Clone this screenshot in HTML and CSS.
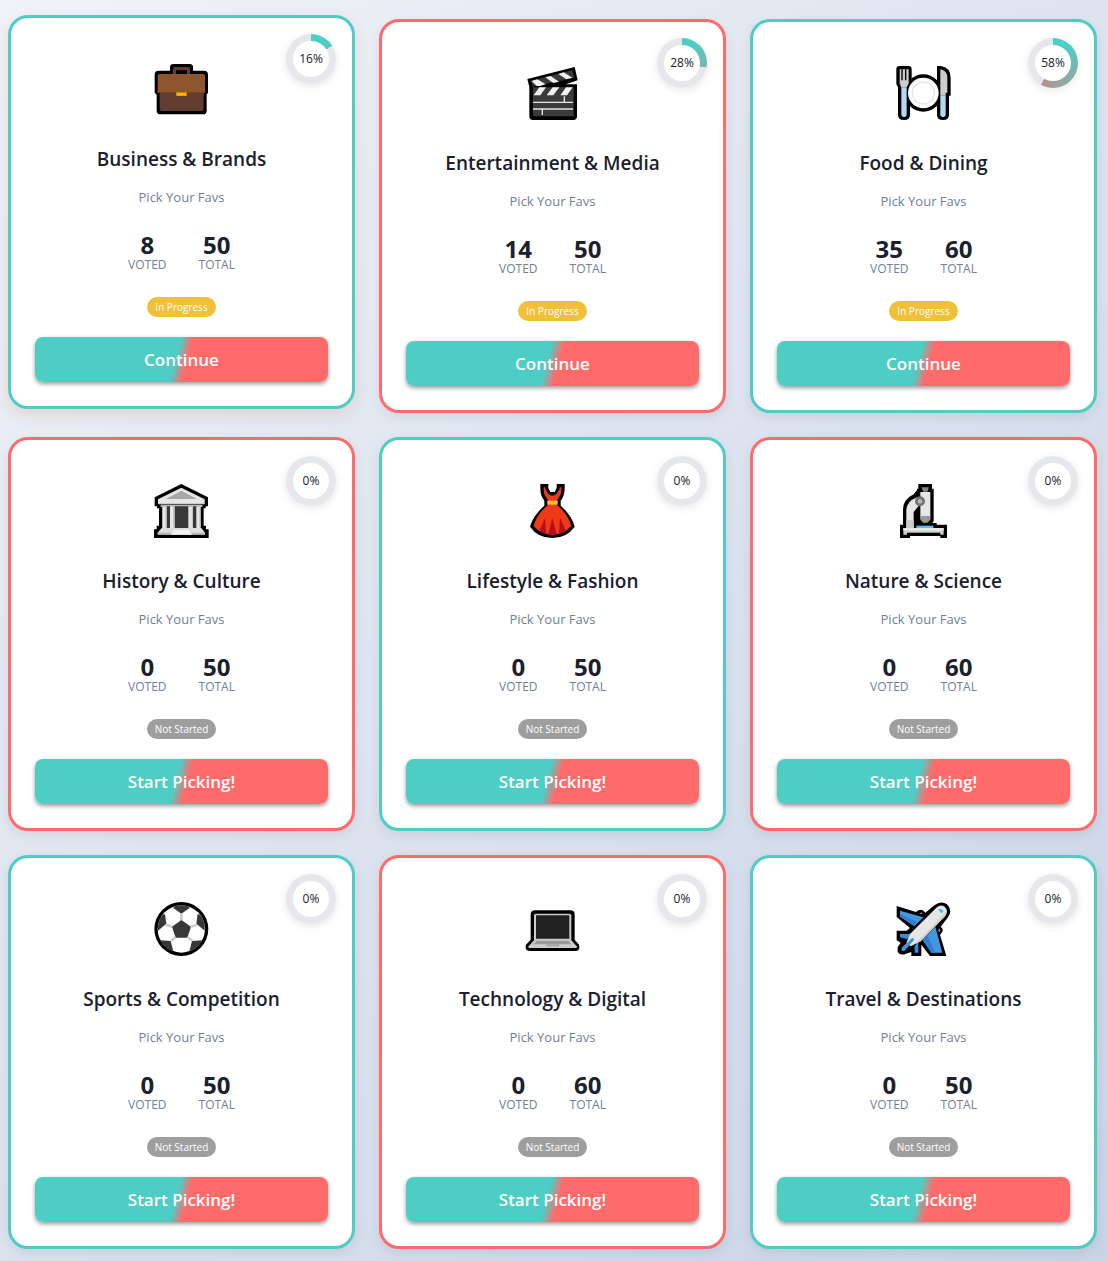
FILE: index.html
```html
<!DOCTYPE html>
<html lang="en">
<head>
    <meta charset="UTF-8">
    <meta name="viewport" content="width=device-width, initial-scale=1.0">
    <title>Pick Your Favs</title>
    <link rel="stylesheet" href="styles.css">
</head>
<body>

<main class="category-grid">
    <article class="card teal raised">
        <div class="progress" style="--done: 16%"><span>16%</span></div>
        <svg class="icon" viewBox="42 36 165 165" aria-hidden="true">
            <path d="M90 62V52Q90 42 100 42H149Q159 42 159 52V62H192Q204 62 204 74V128L200 134V182Q200 193 189 193H61Q50 193 50 182V134L44 128V74Q44 62 56 62Z" fill="#000"/>
            <path d="M99 72V57Q99 51 105 51H144Q150 51 150 57V72H141V61H108V72Z" fill="#613d30"/>
            <path d="M53 128V78Q53 72 59 72H189Q195 72 195 78V128Z" fill="#8e562e"/>
            <path d="M59 128H191V177Q191 183 185 183H65Q59 183 59 177Z" fill="#613d30"/>
            <path d="M53 126H195V129H53Z" fill="#7a4526"/>
            <path d="M108 126H141V138H108Z" fill="#d67d00"/>
            <path d="M111 129H138V137H111Z" fill="#ffb900"/>
        </svg>
        <h2>Business &amp; Brands</h2>
        <p class="subtitle">Pick Your Favs</p>
        <dl class="stats">
            <div><dt>Voted</dt><dd>8</dd></div>
            <div><dt>Total</dt><dd>50</dd></div>
        </dl>
        <span class="badge in-progress">In Progress</span>
        <button type="button">Continue</button>
    </article>

    <article class="card coral">
        <div class="progress" style="--done: 28%"><span>28%</span></div>
        <svg class="icon" viewBox="45 48 165 165" aria-hidden="true">
            <path d="M52 87L194 51L203 91L168 103H201V199Q201 210 190 210H69Q58 210 58 199V111Z" fill="#000"/>
            <path d="M62 92L187 61L193 83L69 110Z" fill="#3b3b3b"/>
            <path d="M65 93L82 88L107 103L90 108H80ZM106 82L122 78L147 95L130 99ZM145 72L161 67L187 83L169 88Z" fill="#f2f2f2"/>
            <path d="M69 112H191V199H69Z" fill="#3b3b3b"/>
            <path d="M88 112H108L91 136H71ZM128 112H148L130 136H110ZM168 112H188L171 136H151Z" fill="#f2f2f2"/>
            <path d="M69 157H189M69 177H189M163 139V157M97 177V195" stroke="#e6e6e6" stroke-width="4" fill="none"/>
        </svg>
        <h2>Entertainment &amp; Media</h2>
        <p class="subtitle">Pick Your Favs</p>
        <dl class="stats">
            <div><dt>Voted</dt><dd>14</dd></div>
            <div><dt>Total</dt><dd>50</dd></div>
        </dl>
        <span class="badge in-progress">In Progress</span>
        <button type="button">Continue</button>
    </article>

    <article class="card teal">
        <div class="progress" style="--done: 58%"><span>58%</span></div>
        <svg class="icon" viewBox="48 138 165 165" aria-hidden="true">
            <path d="M49 148Q49 138 58 138H85Q95 138 95 148V192L90 202V284Q90 300 72 300Q54 300 54 284V202L49 192Z" fill="#000"/>
            <path d="M171 138H182Q212 142 212 174V227H207V284Q207 300 189 300Q171 300 171 284Z" fill="#000"/>
            <circle cx="130" cy="219" r="56" fill="#000"/>
            <path d="M59 148H86V190L80 202H64L59 190Z" fill="#ccc"/>
            <path d="M66 148V181M77 148V181" stroke="#000" stroke-width="4"/>
            <path d="M64 202H80V283Q80 291 72 291Q64 291 64 283Z" fill="#b3daf2"/>
            <path d="M181 148Q202 151 202 174V218H197V227H181Z" fill="#ccc"/>
            <path d="M181 227H197V283Q197 291 189 291Q181 291 181 283Z" fill="#b3daf2"/>
            <circle cx="130" cy="219" r="46" fill="#fff"/>
            <circle cx="130" cy="219" r="33" fill="#fff" stroke="#e6e6e6" stroke-width="4"/>
        </svg>
        <h2>Food &amp; Dining</h2>
        <p class="subtitle">Pick Your Favs</p>
        <dl class="stats">
            <div><dt>Voted</dt><dd>35</dd></div>
            <div><dt>Total</dt><dd>60</dd></div>
        </dl>
        <span class="badge in-progress">In Progress</span>
        <button type="button">Continue</button>
    </article>

    <article class="card coral">
        <div class="progress" style="--done: 0%"><span>0%</span></div>
        <svg class="icon" viewBox="42 42 165 165" aria-hidden="true">
            <path d="M124 42L204 82V109H197V115H191V167H198V178H206V204H42V178H50V167H57V115H51V109H44V82Z" fill="#000"/>
            <path d="M124 53L194 88V101H54V88Z" fill="#e6e6e6"/>
            <path d="M124 62L171 87H77Z" fill="#a8a8a8"/>
            <path d="M54 99H194V103H54Z" fill="#ccc"/>
            <path d="M62 104H187V111H180V174H67V111H62Z" fill="#b8b8b8"/>
            <path d="M67 109H180V175H67Z" fill="#383838"/>
            <path d="M67 109H80V175H67ZM90 109H104V175H90ZM145 109H159V175H145ZM169 109H182V175H169Z" fill="#e6e6e6"/>
            <path d="M78 113V171M101 113V171M157 113V171M180 113V171" stroke="#bdbdbd" stroke-width="3"/>
            <path d="M65 174H184L195 188V194H53V188Z" fill="#dedede"/>
            <path d="M102 179H146L155 194H93Z" fill="#f2f2f2"/>
            <path d="M53 190H93M155 190H195" stroke="#b8b8b8" stroke-width="4"/>
        </svg>
        <h2>History &amp; Culture</h2>
        <p class="subtitle">Pick Your Favs</p>
        <dl class="stats">
            <div><dt>Voted</dt><dd>0</dd></div>
            <div><dt>Total</dt><dd>50</dd></div>
        </dl>
        <span class="badge">Not Started</span>
        <button type="button">Start Picking!</button>
    </article>

    <article class="card teal">
        <div class="progress" style="--done: 0%"><span>0%</span></div>
        <svg class="icon" viewBox="45 42 165 165" aria-hidden="true">
            <path d="M91 42H115V54L121 66H134L140 54V42H164V58Q163 80 152 92V107Q185 136 194 170Q170 204 127 204Q84 204 60 170Q70 136 103 107V92Q92 80 91 58Z" fill="#000"/>
            <path d="M101 52H106V56Q115 77 127 77Q140 77 149 56V52H154V60Q153 77 142 88V106Q174 133 184 168Q161 194 127 194Q93 194 71 168Q80 133 113 106V88Q102 77 101 60Z" fill="#f03a17"/>
            <path d="M105 144L88 184Q97 190 108 191Z" fill="#b50e1e"/>
            <path d="M127 144L115 193Q127 195 140 193Z" fill="#b50e1e"/>
            <path d="M150 144L147 191Q159 190 168 183Z" fill="#b50e1e"/>
            <path d="M112 92H143V104H112Z" fill="#ffbf32"/>
        </svg>
        <h2>Lifestyle &amp; Fashion</h2>
        <p class="subtitle">Pick Your Favs</p>
        <dl class="stats">
            <div><dt>Voted</dt><dd>0</dd></div>
            <div><dt>Total</dt><dd>50</dd></div>
        </dl>
        <span class="badge">Not Started</span>
        <button type="button">Start Picking!</button>
    </article>

    <article class="card coral">
        <div class="progress" style="--done: 0%"><span>0%</span></div>
        <svg class="icon" viewBox="48 42 165 165" aria-hidden="true">
            <path d="M115 42H156V56H161V154L157 159H170V164H201V204H181V198H90V204H60V164H69V118Q70 88 101 73L111 61V56H115Z" fill="#000"/>
            <path d="M124 52H147L142 65H130Z" fill="#858585"/>
            <path d="M111 82Q80 94 79 120V174H101V126L120 103V88Z" fill="#e6e6e6"/>
            <path d="M79 150V174H101V150Z" fill="#ccc"/>
            <path d="M121 66H151V143L142 157H130L121 143Z" fill="#e6e6e6"/>
            <path d="M121 138H151V149L142 158H130L121 149Z" fill="#999"/>
            <path d="M109 167H160V174H109Z" fill="#50c8e0"/>
            <path d="M70 174H191V194H181V188H81V194H70Z" fill="#ccc"/>
            <path d="M70 174H191V182H70Z" fill="#e6e6e6"/>
            <circle cx="120" cy="94" r="11" fill="#b8b8b8" stroke="#737373" stroke-width="8"/>
        </svg>
        <h2>Nature &amp; Science</h2>
        <p class="subtitle">Pick Your Favs</p>
        <dl class="stats">
            <div><dt>Voted</dt><dd>0</dd></div>
            <div><dt>Total</dt><dd>60</dd></div>
        </dl>
        <span class="badge">Not Started</span>
        <button type="button">Start Picking!</button>
    </article>

    <article class="card teal">
        <div class="progress" style="--done: 0%"><span>0%</span></div>
        <svg class="icon" viewBox="42 48 165 165" aria-hidden="true">
            <circle cx="124" cy="129" r="81" fill="#000"/>
            <circle cx="124" cy="129" r="71" fill="#fff"/>
            <path d="M124 102L153 122L142 155H107L96 122ZM101 62Q124 54 148 62V67L124 83L101 67ZM68 86L75 84L79 113L54 134Q52 104 68 86ZM180 86L173 84L169 113L194 134Q196 104 180 86ZM61 163L92 165L100 196Q74 188 61 163ZM187 163L156 165L148 196Q174 188 187 163Z" fill="#383838"/>
            <path d="M124 82V102M78 117L97 122M170 117L151 122M107 153L93 165M142 153L157 165" stroke="#ccc" stroke-width="8"/>
        </svg>
        <h2>Sports &amp; Competition</h2>
        <p class="subtitle">Pick Your Favs</p>
        <dl class="stats">
            <div><dt>Voted</dt><dd>0</dd></div>
            <div><dt>Total</dt><dd>50</dd></div>
        </dl>
        <span class="badge">Not Started</span>
        <button type="button">Start Picking!</button>
    </article>

    <article class="card coral">
        <div class="progress" style="--done: 0%"><span>0%</span></div>
        <svg class="icon" viewBox="45 48 165 165" aria-hidden="true">
            <path d="M62 86Q62 73 75 73H181Q194 73 194 86V161L207 176Q212 195 196 195H60Q43 195 48 176L62 161Z" fill="#000"/>
            <path d="M72 88Q72 83 77 83H178Q184 83 184 88V164H72Z" fill="#ccc"/>
            <path d="M78 88H178V158H78Z" fill="#212121"/>
            <path d="M72 163H184L200 181V186H56V181Z" fill="#ccc"/>
            <path d="M80 165H175L184 175H71Z" fill="#999"/>
            <path d="M109 175H147V181H109Z" fill="#a3a3a3"/>
        </svg>
        <h2>Technology &amp; Digital</h2>
        <p class="subtitle">Pick Your Favs</p>
        <dl class="stats">
            <div><dt>Voted</dt><dd>0</dd></div>
            <div><dt>Total</dt><dd>60</dd></div>
        </dl>
        <span class="badge">Not Started</span>
        <button type="button">Start Picking!</button>
    </article>

    <article class="card teal">
        <div class="progress" style="--done: 0%"><span>0%</span></div>
        <svg class="icon" viewBox="48 48 165 165" aria-hidden="true">
            <path d="M50 60L108 78Q124 64 136 80L163 58Q183 42 201 55Q219 72 204 94L182 122Q196 132 180 146L199 210H150L124 176V210H94V198L78 203Q62 210 53 198V184L62 170L50 163V134H80L90 126L50 93Z" fill="#000"/>
            <path d="M60 74L130 94L103 121L60 92Z" fill="#4297e0"/>
            <path d="M60 84L112 109L103 119L60 92Z" fill="#2f7ed0"/>
            <path d="M166 122L187 200H154L128 162Z" fill="#4297e0"/>
            <path d="M143 149L166 200H154L128 162Z" fill="#2f7ed0"/>
            <path d="M60 144H92L82 160L60 154ZM115 168V200H104V180Z" fill="#3a8cda"/>
            <path d="M169 65Q183 53 194 62Q207 74 195 91L122 166L92 181L79 171L90 144Z" fill="#e6e6e6"/>
            <path d="M199 76Q200 84 195 91L122 166L105 174Z" fill="#d2d2d2"/>
            <path d="M65 185L96 156Q103 155 102 162L73 195H65Z" fill="#4297e0"/>
            <path d="M176 70Q184 67 190 76Q189 83 184 80Q176 76 176 70Z" fill="#28c8f0"/>
            <path d="M117 84L124 79L129 84ZM174 132L179 127L181 135L177 140Z" fill="#858585"/>
        </svg>
        <h2>Travel &amp; Destinations</h2>
        <p class="subtitle">Pick Your Favs</p>
        <dl class="stats">
            <div><dt>Voted</dt><dd>0</dd></div>
            <div><dt>Total</dt><dd>50</dd></div>
        </dl>
        <span class="badge">Not Started</span>
        <button type="button">Start Picking!</button>
    </article>
</main>

</body>
</html>
```

FILE: styles.css
```css
:root {
    --teal: #4ecdc4;
    --coral: #ff6b6b;
}

* {
    box-sizing: border-box;
}

body {
    margin: 0;
    min-height: 100vh;
    font-family: "Segoe UI", "Open Sans", "Noto Sans", sans-serif;
    color: #1a202c;
    background: linear-gradient(135deg, #f0f3f8 0%, #c8d3e6 100%);
}

.category-grid {
    display: grid;
    grid-template-columns: repeat(3, 1fr);
    gap: 24px;
    padding: 19px 11px 13px 8px;
}

.card {
    position: relative;
    display: flex;
    flex-direction: column;
    align-items: center;
    padding: 24px;
    background: white;
    border: 3px solid var(--teal);
    border-radius: 20px;
    box-shadow: 0 4px 12px rgba(0, 0, 0, 0.08);
    text-align: center;
}

.card.coral {
    border-color: var(--coral);
}

.card.raised {
    transform: translateY(-4px);
    box-shadow: 0 6px 16px rgba(200, 120, 80, 0.2);
}

/* Progress ring */
.progress {
    position: absolute;
    top: 16px;
    right: 16px;
    display: grid;
    place-items: center;
    width: 50px;
    height: 50px;
    border-radius: 50%;
    background:
        conic-gradient(transparent var(--done), #e5e7eb var(--done)),
        conic-gradient(var(--teal) 10%, var(--coral) 90%);
    box-shadow: 0 2px 8px rgba(0, 0, 0, 0.1);
}

.progress span {
    width: 36px;
    border-radius: 50%;
    background: white;
    font-size: 12px;
    line-height: 36px;
    font-weight: 500;
}

.icon {
    width: 55px;
    height: 55px;
    margin-top: 20px;
}

h2 {
    margin: 28px 0 0;
    font-size: 19px;
    line-height: 28px;
    font-weight: 600;
}

.subtitle {
    margin: 12px 0 0;
    font-size: 13px;
    line-height: 24px;
    color: #718096;
}

/* Vote counts */
.stats {
    display: flex;
    gap: 32px;
    margin: 24px 0;
}

.stats div {
    display: flex;
    flex-direction: column-reverse;
}

.stats dd {
    margin: 0;
    font-size: 24px;
    line-height: 24px;
    font-weight: 700;
}

.stats dt {
    font-size: 12px;
    line-height: 16px;
    text-transform: uppercase;
    color: #718096;
}

.badge {
    padding: 0 8px;
    border-radius: 10px;
    background: #9e9e9e;
    color: white;
    font-size: 10px;
    line-height: 20px;
    font-weight: 500;
}

.badge.in-progress {
    background: #f0c038;
}

button {
    width: 100%;
    margin-top: 20px;
    padding: 10px;
    border: none;
    border-radius: 8px;
    background: linear-gradient(105deg, var(--teal) 48%, var(--coral) 52%);
    box-shadow: 0 2px 4px rgba(0, 0, 0, 0.4);
    color: white;
    font-family: inherit;
    font-size: 17px;
    line-height: 25px;
    font-weight: 600;
    cursor: pointer;
}

@media (max-width: 900px) {
    .category-grid {
        grid-template-columns: repeat(2, 1fr);
    }
}

@media (max-width: 600px) {
    .category-grid {
        grid-template-columns: 1fr;
    }
}
```
